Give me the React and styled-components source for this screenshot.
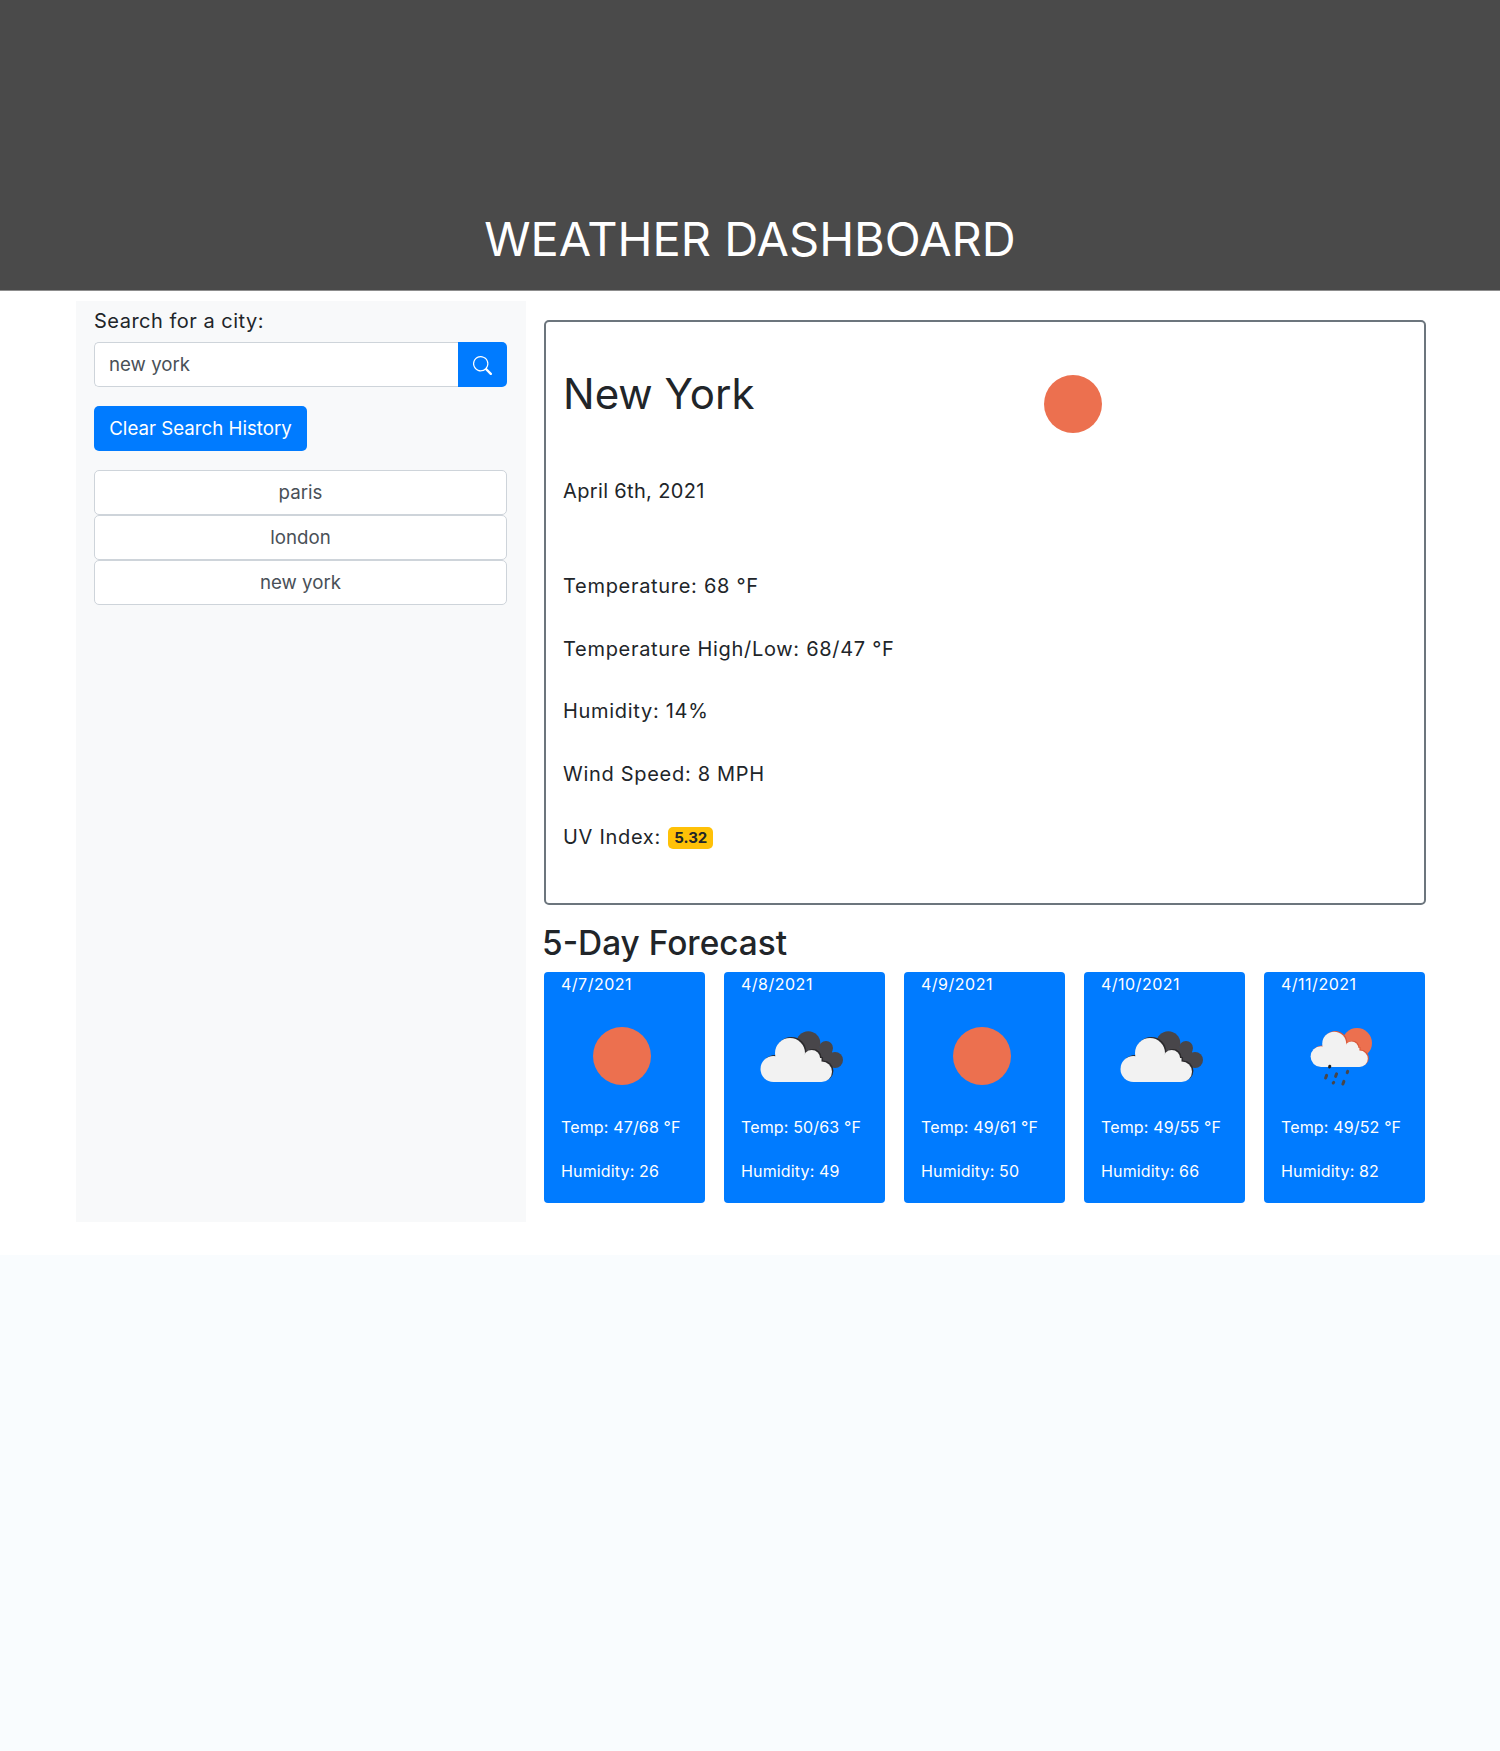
import React from 'react';
import styled, { createGlobalStyle } from 'styled-components';
import { BsSearch } from 'react-icons/bs';

const Global = createGlobalStyle`
  html, body { margin: 0; padding: 0; background: #f9fcfe; }
  body { font-family: "Inter", "Noto Sans", sans-serif; color: #212529; }
  * { box-sizing: border-box; }
`;

const Header = styled.header`
  height: 291px;
  background: #4a4a4a;
  display: flex;
  align-items: flex-end;
  justify-content: center;
  border-bottom: 1px solid #8d8d8d;
`;
const Title = styled.h1`
  margin: 0 0 23px;
  font-size: 47px;
  line-height: 56px;
  font-weight: 400;
  color: #fff;
`;
const Content = styled.div`
  background: #fff;
  height: 964px;
  padding: 10px 0 0 76px;
  display: flex;
  gap: 18px;
  align-items: flex-start;
`;
const Sidebar = styled.aside`
  width: 450px;
  height: 921px;
  background: #f8f9fa;
  padding: 5px 19px 0 18px;
`;
const Label = styled.label`
  display: block;
  font-size: 20px;
  letter-spacing: 0.5px;
  line-height: 30px;
  margin-bottom: 6px;
`;
const SearchGroup = styled.div`
  display: flex;
  height: 45px;
`;
const Input = styled.input`
  flex: 1;
  min-width: 0;
  border: 1.5px solid #ced4da;
  border-right: 0;
  border-radius: 5px 0 0 5px;
  padding: 0 14px 1px;
  font: inherit;
  font-size: 18.7px;
  color: #495057;
  background: #fff;
`;
const SearchButton = styled.button`
  width: 49px;
  border: 0;
  border-radius: 0 5px 5px 0;
  background: #007bff;
  color: #fff;
  display: flex;
  align-items: center;
  justify-content: center;
  font-size: 19px;
  padding: 2px 0 0;
`;
const ClearButton = styled.button`
  display: block;
  margin: 19px 0;
  height: 45px;
  width: 213px;
  border: 0;
  border-radius: 5px;
  background: #007bff;
  color: #fff;
  font: inherit;
  font-size: 18.7px;
  padding: 0 0 1px;
`;
const HistoryItem = styled.button`
  display: block;
  width: 100%;
  height: 45px;
  border: 1.5px solid #ced4da;
  border-radius: 5px;
  background: #fff;
  color: #495057;
  font: inherit;
  font-size: 18.7px;
  padding: 0 0 1px;
`;
const Main = styled.main`
  width: 882px;
  padding-top: 19px;
`;
const CurrentCard = styled.section`
  height: 585px;
  border: 2px solid #6c757d;
  border-radius: 5px;
  padding: 32px 17px 0;
`;
const CityRow = styled.div`
  display: grid;
  grid-template-columns: 460px 100px;
  height: 100px;
`;
const City = styled.h2`
  margin: 0;
  font-size: 42px;
  line-height: 79px;
  font-weight: 400;
`;
const DateLine = styled.p`
  margin: 22px 0 65px;
  font-size: 20px;
  letter-spacing: 0.35px;
  line-height: 30px;
`;
const Stat = styled.p`
  margin: 0 0 32.7px;
  font-size: 20px;
  letter-spacing: 0.7px;
  line-height: 30px;
`;
const UvBadge = styled.span`
  display: inline-block;
  margin-left: 1px;
  padding: 0 6px;
  background: #ffc107;
  border-radius: 5px;
  font-size: 15px;
  letter-spacing: 0;
  line-height: 22px;
  font-weight: 700;
  vertical-align: 1px;
`;
const ForecastTitle = styled.h3`
  margin: 15px 0 5px -2px;
  font-size: 33.4px;
  line-height: 47px;
  font-weight: 500;
`;
const ForecastGrid = styled.div`
  display: grid;
  grid-template-columns: repeat(5, 161px);
  column-gap: 19px;
`;
const DayCard = styled.article`
  height: 231px;
  background: #007bff;
  border-radius: 4px;
  color: #fff;
  padding: 0 17px;
`;
const DayDate = styled.div`
  font-size: 16px;
  letter-spacing: 0.5px;
  line-height: 24px;
`;
const DayIcon = styled.svg`
  display: block;
  width: 100px;
  height: 100px;
  margin: 10px 0 9px 11px;
`;
const DayStat = styled.div`
  font-size: 16px;
  letter-spacing: 0.15px;
  line-height: 24px;
  margin-bottom: 20px;
`;
const CurrentIcon = styled.svg`
  display: block;
  width: 100px;
  height: 100px;
`;

const CloudShape = ({ fill, dx = 0, dy = 0 }) => (
  <g fill={fill} transform={`translate(${dx} ${dy})`}>
    <circle cx="21.5" cy="63" r="13" />
    <circle cx="38" cy="47" r="15" />
    <circle cx="59.7" cy="52.5" r="8.5" />
    <circle cx="69.7" cy="65.7" r="10.3" />
    <rect x="21.5" y="52" width="48" height="24" />
  </g>
);
const FrontCloud = ({ shadow }) => (
  <>
    <CloudShape fill={shadow} dx={1.4} dy={-0.9} />
    <CloudShape fill="#f2f2f2" />
  </>
);
const Sun = () => <circle cx="50" cy="50" r="29" fill="#ec704f" />;
const Clouds = () => (
  <>
    <g fill="#48464a">
      <circle cx="56.3" cy="37.3" r="12" />
      <circle cx="74" cy="42" r="7" />
      <circle cx="83" cy="54" r="8" />
      <rect x="56" y="42" width="24" height="20" />
    </g>
    <FrontCloud shadow="#2b2a2d" />
  </>
);
const Rain = () => (
  <>
    <circle cx="65" cy="37" r="15" fill="#ec704f" />
    <g transform="translate(11.8 0.2) scale(0.8)">
      <FrontCloud shadow="#d9583a" />
    </g>
    <g stroke="#48464a" strokeWidth="3" strokeLinecap="round">
      <path d="M37.8 60.2l-.2 .8" stroke="#222" />
      <path d="M34.6 69.4l-1 2.6M44.6 67.8l-1 2.6M55.7 65.4l-.5 1.2M41.7 76.4l-.5 .6M51.9 75.4l-1 2.6" />
    </g>
  </>
);

const days = [
  { date: '4/7/2021', temp: '47/68', humidity: 26, Icon: Sun },
  { date: '4/8/2021', temp: '50/63', humidity: 49, Icon: Clouds },
  { date: '4/9/2021', temp: '49/61', humidity: 50, Icon: Sun },
  { date: '4/10/2021', temp: '49/55', humidity: 66, Icon: Clouds },
  { date: '4/11/2021', temp: '49/52', humidity: 82, Icon: Rain },
];

export default function App() {
  return (
    <>
      <Global />
      <Header>
        <Title>WEATHER DASHBOARD</Title>
      </Header>
      <Content>
        <Sidebar>
          <Label htmlFor="city">Search for a city:</Label>
          <SearchGroup>
            <Input id="city" defaultValue="new york" />
            <SearchButton aria-label="Search"><BsSearch /></SearchButton>
          </SearchGroup>
          <ClearButton>Clear Search History</ClearButton>
          {['paris', 'london', 'new york'].map((c) => (
            <HistoryItem key={c}>{c}</HistoryItem>
          ))}
        </Sidebar>
        <Main>
          <CurrentCard>
            <CityRow>
              <City>New York</City>
              <CurrentIcon viewBox="0 0 100 100"><Sun /></CurrentIcon>
            </CityRow>
            <DateLine>April 6th, 2021</DateLine>
            <Stat>Temperature: 68 °F</Stat>
            <Stat>Temperature High/Low: 68/47 °F</Stat>
            <Stat>Humidity: 14%</Stat>
            <Stat>Wind Speed: 8 MPH</Stat>
            <Stat>UV Index: <UvBadge>5.32</UvBadge></Stat>
          </CurrentCard>
          <ForecastTitle>5-Day Forecast</ForecastTitle>
          <ForecastGrid>
            {days.map(({ date, temp, humidity, Icon }) => (
              <DayCard key={date}>
                <DayDate>{date}</DayDate>
                <DayIcon viewBox="0 0 100 100"><Icon /></DayIcon>
                <DayStat>Temp: {temp} °F</DayStat>
                <DayStat>Humidity: {humidity}</DayStat>
              </DayCard>
            ))}
          </ForecastGrid>
        </Main>
      </Content>
    </>
  );
}
